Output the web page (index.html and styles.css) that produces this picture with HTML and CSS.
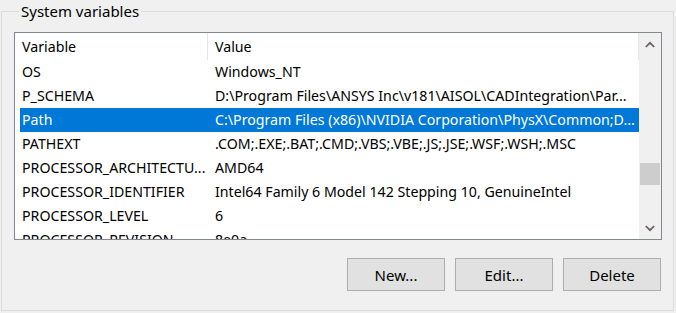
FILE: index.html
```html
<!DOCTYPE html>
<html lang="en">
<head>
    <meta charset="UTF-8">
    <meta name="viewport" content="width=device-width, initial-scale=1.0">
    <title>System variables</title>
    <link rel="stylesheet" href="styles.css">
</head>
<body>
    <!-- System variables group -->
    <fieldset class="group">
        <legend>System variables</legend>

        <div class="listbox">
            <div class="list">
                <div class="list-head">
                    <span class="col-name">Variable</span>
                    <span class="col-value">Value</span>
                </div>
                <div class="row"><span class="col-name">OS</span><span class="col-value">Windows_NT</span></div>
                <div class="row"><span class="col-name">P_SCHEMA</span><span class="col-value">D:\Program Files\ANSYS Inc\v181\AISOL\CADIntegration\Par...</span></div>
                <div class="row selected"><span class="col-name">Path</span><span class="col-value">C:\Program Files (x86)\NVIDIA Corporation\PhysX\Common;D...</span></div>
                <div class="row"><span class="col-name">PATHEXT</span><span class="col-value">.COM;.EXE;.BAT;.CMD;.VBS;.VBE;.JS;.JSE;.WSF;.WSH;.MSC</span></div>
                <div class="row"><span class="col-name">PROCESSOR_ARCHITECTU...</span><span class="col-value">AMD64</span></div>
                <div class="row"><span class="col-name">PROCESSOR_IDENTIFIER</span><span class="col-value">Intel64 Family 6 Model 142 Stepping 10, GenuineIntel</span></div>
                <div class="row"><span class="col-name">PROCESSOR_LEVEL</span><span class="col-value">6</span></div>
                <div class="row"><span class="col-name">PROCESSOR_REVISION</span><span class="col-value">8e0a</span></div>
            </div>

            <div class="scrollbar">
                <div class="arrow">
                    <svg width="10" height="7" viewBox="0 0 10 7"><polyline points="0.8,6 5,1.8 9.2,6" fill="none" stroke="#606060" stroke-width="1.7"/></svg>
                </div>
                <div class="track"><div class="thumb"></div></div>
                <div class="arrow">
                    <svg width="10" height="7" viewBox="0 0 10 7"><polyline points="0.8,1 5,5.2 9.2,1" fill="none" stroke="#606060" stroke-width="1.7"/></svg>
                </div>
            </div>
        </div>

        <div class="actions">
            <button>New...</button>
            <button>Edit...</button>
            <button>Delete</button>
        </div>
    </fieldset>
</body>
</html>
```

FILE: styles.css
```css
body {
    font-family: "Noto Sans", "Open Sans", sans-serif;
    font-size: 14.2px;
    background-color: #f0f0f0;
    color: #000;
    margin: 0;
    padding: 0;
}

.group {
    box-sizing: border-box;
    width: 673px;
    height: 310px;
    margin: 1px 0 0 1px;
    padding: 0 11px 0 12px;
    border: 1px solid #dcdcdc;
}

.group legend {
    margin-left: 5px;
    padding: 0 2px;
    font-size: 15px;
    line-height: 20px;
}

.listbox {
    display: flex;
    height: 206px;
    margin-top: 11px;
    border: 1px solid #828790;
    background-color: #fff;
}

.list {
    flex: 1;
    overflow: hidden;
    padding-left: 5px;
}

.list-head, .row {
    display: flex;
    white-space: nowrap;
}

.list-head {
    height: 27px;
    line-height: 27px;
}

.list-head .col-name, .list-head .col-value {
    border-right: 1px solid #e5e5e5;
}

.row {
    height: 24px;
    line-height: 24px;
}

.col-name {
    box-sizing: border-box;
    width: 188px;
    flex: none;
    padding-left: 2px;
    overflow: hidden;
}

.col-value {
    flex: 1;
    padding-left: 7px;
    overflow: hidden;
}

.row.selected {
    background-color: #0078d7;
    color: #fff;
}

.scrollbar {
    width: 22px;
    display: flex;
    flex-direction: column;
    background-color: #f0f0f0;
}

.arrow {
    height: 22px;
    display: flex;
    justify-content: center;
    align-items: center;
}

.track {
    flex: 1;
    padding: 0 1px;
}

.thumb {
    height: 22px;
    margin-top: 108px;
    background-color: #cdcdcd;
}

.actions {
    display: flex;
    justify-content: flex-end;
    gap: 10px;
    margin: 18px 1px 0 0;
}

.actions button {
    width: 98px;
    height: 33px;
    padding: 0;
    font-family: inherit;
    font-size: 15px;
    color: #000;
    background-color: #e1e1e1;
    border: 1px solid #adadad;
    border-radius: 0;
}
```
